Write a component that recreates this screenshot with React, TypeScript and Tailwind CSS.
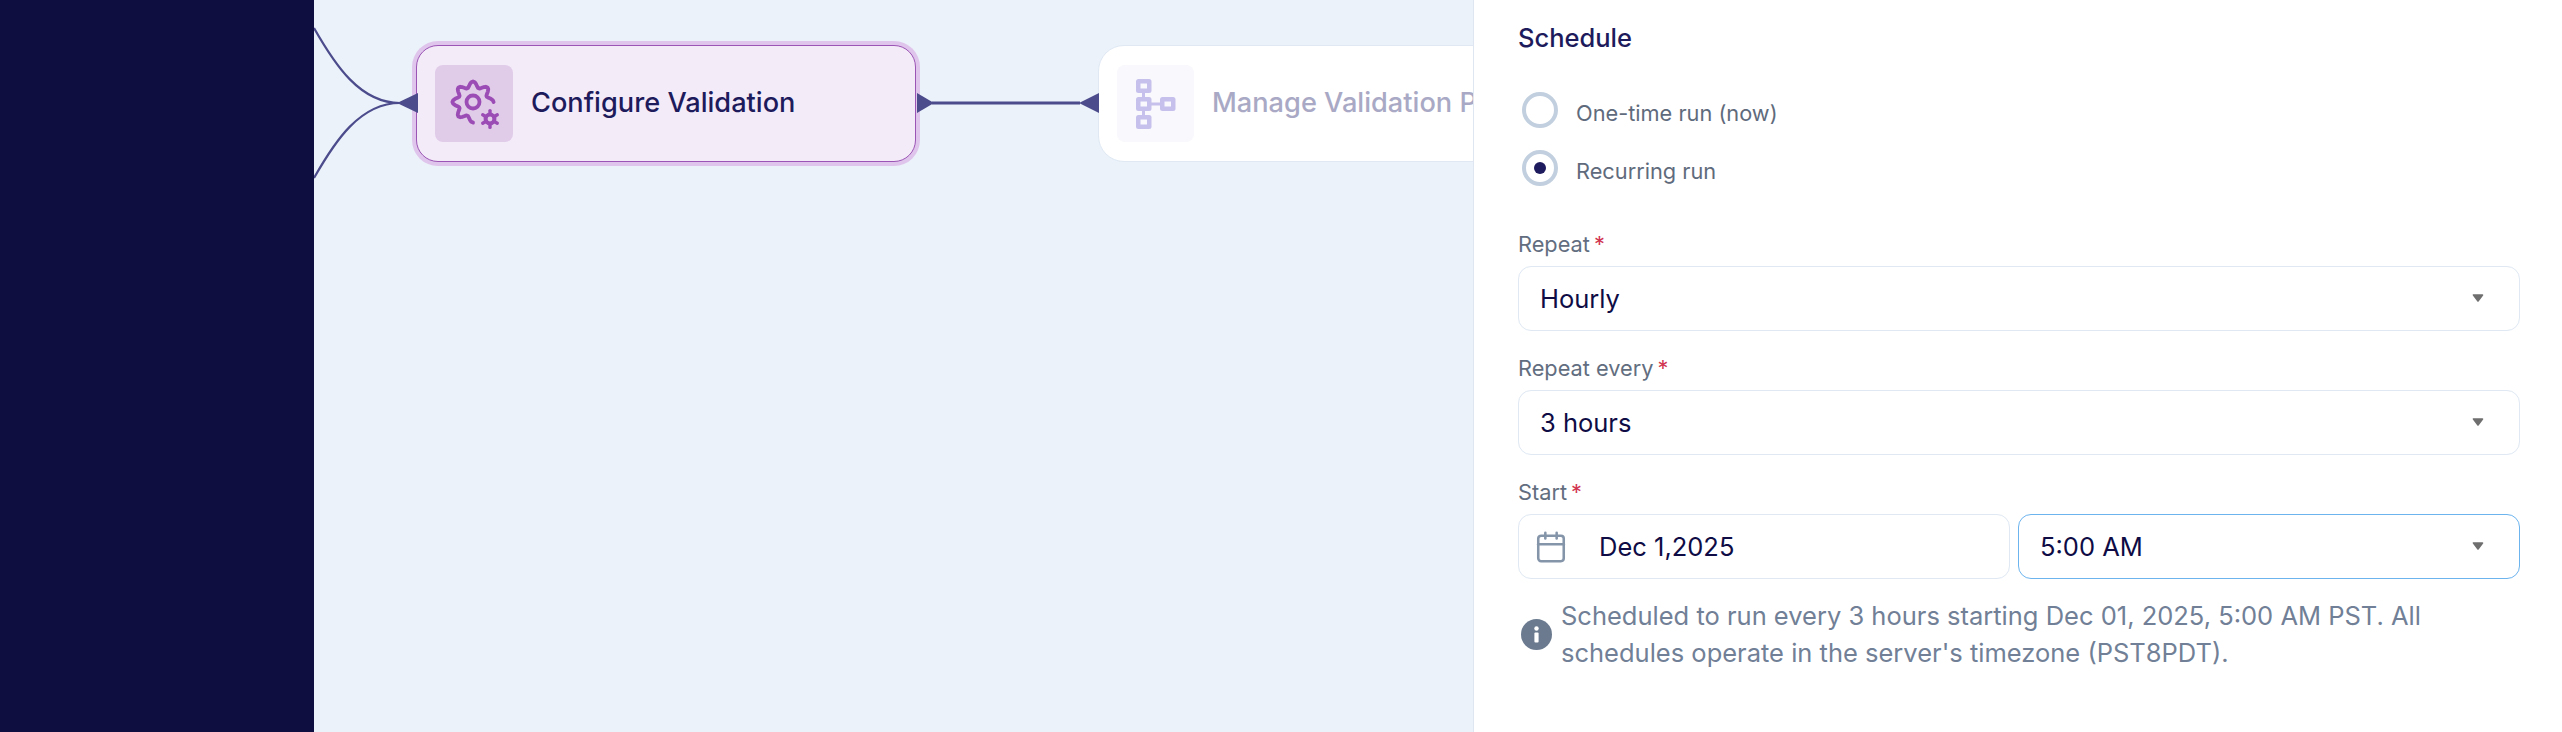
import { Calendar } from "lucide-react";

// Wavy outline of the big gear, left open towards the small cog
function gearPath() {
  const cx = 21;
  const cy = 21;
  const pts: string[] = [];
  for (let deg = 0; deg >= -270; deg -= 5) {
    const a = (deg * Math.PI) / 180;
    const r = 17.6 + 3 * Math.cos(8 * (a + Math.PI / 2));
    pts.push(`${(cx + r * Math.cos(a)).toFixed(2)} ${(cy + r * Math.sin(a)).toFixed(2)}`);
  }
  return "M" + pts.join("L");
}

function GearIcon() {
  const spokes = [0, 60, 120, 180, 240, 300];
  return (
    <svg width="48" height="48" viewBox="-2 -1 48 48" fill="none" stroke="#9b4db5" strokeWidth="3.8" strokeLinecap="round" strokeLinejoin="round" className="overflow-visible">
      <path d={gearPath()} />
      <circle cx="21" cy="21" r="6.5" />
      <circle cx="38" cy="38" r="4.4" strokeWidth="4" />
      {spokes.map((s) => {
        const a = (s * Math.PI) / 180 - Math.PI / 2;
        return (
          <line
            key={s}
            x1={38 + 5 * Math.cos(a)}
            y1={38 + 5 * Math.sin(a)}
            x2={38 + 8.4 * Math.cos(a)}
            y2={38 + 8.4 * Math.sin(a)}
            strokeWidth="3.4"
          />
        );
      })}
    </svg>
  );
}

function TreeIcon() {
  const boxes = [
    { x: 0, y: 0 },
    { x: 0, y: 18 },
    { x: 0, y: 36 },
    { x: 24, y: 18 },
  ];
  return (
    <svg width="40" height="50" viewBox="0 0 40 50">
      <rect x="6" y="10" width="3" height="30" fill="#c5c0ec" />
      <rect x="12" y="23.5" width="14" height="3" fill="#c5c0ec" />
      {boxes.map((b) => (
        <g key={`${b.x}-${b.y}`}>
          <rect x={b.x} y={b.y} width="15.5" height="14" rx="2.5" fill="#c5c0ec" />
          <rect x={b.x + 4.5} y={b.y + 4.5} width="6.5" height="5" fill="#f8f8fd" />
        </g>
      ))}
    </svg>
  );
}

function Caret() {
  return (
    <svg width="12" height="8" viewBox="0 0 12 8" className="shrink-0">
      <path d="M1.5 1h9L6 7z" fill="#6f6f6f" stroke="#6f6f6f" strokeWidth="1.6" strokeLinejoin="round" />
    </svg>
  );
}

function Radio({ label, checked }: { label: string; checked?: boolean }) {
  return (
    <div className="flex h-9 items-center">
      <div className="ml-1 flex h-9 w-9 shrink-0 items-center justify-center rounded-full border-4 border-[#c2cfdf] bg-white">
        {checked && <div className="h-3 w-3 rounded-full bg-[#1e1a5e]" />}
      </div>
      <span className="ml-[18px] mt-[6px] text-[21.75px] leading-8 text-[#5f6b7c]">{label}</span>
    </div>
  );
}

function Label({ text }: { text: string }) {
  return (
    <div className="mb-[11px] flex h-6 items-center pt-px text-[21.75px] leading-6 text-[#626e80]">
      {text}
      <span className="ml-1 text-[21.75px] text-[#d1344f]">*</span>
    </div>
  );
}

function Select({ value, focused }: { value: string; focused?: boolean }) {
  return (
    <div
      className={`flex h-[65px] w-full items-center justify-between rounded-[13px] border bg-white pb-px pl-[21px] pr-[35px] text-[25.5px] text-[#0e0b45] ${
        focused ? "border-[#6cb4ee]" : "border-[#dfe8f3]"
      }`}
    >
      <span className="mt-0.5">{value}</span>
      <Caret />
    </div>
  );
}

export default function App() {
  return (
    <div className="flex h-[732px] w-[2562px] overflow-hidden bg-[#ebf2fa] font-['Inter',sans-serif]">
      <aside className="w-[314px] shrink-0 bg-[#0e0e40]" />

      {/* Flow canvas */}
      <main className="relative flex-1 overflow-hidden">
        <svg className="absolute left-0 top-0" width="1159" height="732" fill="none" stroke="#4c4b8b" strokeWidth="2.2">
          <path d="M0 28C21 65 46 103 86 103" />
          <path d="M0 178C21 141 46 103 86 103" />
          <path d="M618 103H766" strokeWidth="3" />
        </svg>

        <div className="absolute left-[102px] top-[45px] flex h-[117px] w-[500px] items-center rounded-[22px] border border-[#9b55b5] bg-[#f4ebf9] pl-[18px] shadow-[0_0_0_4px_#dfc5eb]">
          <div className="flex h-[77px] w-[78px] items-center justify-center rounded-lg bg-[#e0cbe9]">
            <GearIcon />
          </div>
          <span className="ml-[18px] text-[27.2px] font-medium text-[#1e1b5c]">Configure Validation</span>
        </div>

        <div className="absolute left-[784px] top-[45px] flex h-[117px] w-[501px] items-center rounded-[26px] border border-[#dfe8f3] bg-white pl-[18px]">
          <div className="flex h-[77px] w-[77px] items-center justify-center rounded-lg bg-[#f8f8fd]">
            <TreeIcon />
          </div>
          <span className="ml-[18px] whitespace-nowrap text-[27.2px] font-medium text-[#a9a9c5]">Manage Validation Plan</span>
        </div>

        {/* Connection handles sit over the node rings */}
        <svg className="absolute left-0 top-0" width="1159" height="732">
          <path d="M83 103L104 93V113Z" fill="#4c4b8b" />
          <path d="M603 93L620 103L603 113Z" fill="#4c4b8b" />
          <path d="M765 103L785 93V113Z" fill="#4c4b8b" />
        </svg>
      </main>

      {/* Schedule panel */}
      <section className="relative w-[1089px] shrink-0 border-l border-[#dde6f1] bg-white pl-11 pr-[42px] pt-5">
        <h2 className="text-[25.5px] font-medium leading-9 text-[#1e1b5c]">Schedule</h2>

        <div className="mt-9 flex flex-col gap-[22px]">
          <Radio label="One-time run (now)" />
          <Radio label="Recurring run" checked />
        </div>

        <div className="mt-[45px]">
          <Label text="Repeat" />
          <Select value="Hourly" />
        </div>
        <div className="mt-6">
          <Label text="Repeat every" />
          <Select value="3 hours" />
        </div>
        <div className="mt-6">
          <Label text="Start" />
          <div className="flex gap-2">
            <div className="flex h-[65px] w-[492px] shrink-0 items-center rounded-[13px] border border-[#dfe8f3] bg-white pl-[15px] text-[25.5px] text-[#0e0b45]">
              <Calendar size={34} strokeWidth={1.8} className="text-[#8494a9]" />
              <span className="ml-[31px] mt-0.5">Dec 1,2025</span>
            </div>
            <Select value="5:00 AM" focused />
          </div>
        </div>

        <div className="mt-[18px] flex items-center">
          <svg width="31" height="31" viewBox="0 0 31 31" className="ml-[3px] shrink-0">
            <circle cx="15.5" cy="15.5" r="15.5" fill="#6b7a8f" />
            <circle cx="15.5" cy="9.5" r="2.2" fill="#fff" />
            <rect x="13.4" y="13.5" width="4.2" height="10" rx="1" fill="#fff" />
          </svg>
          <p className="ml-[9px] text-[25.5px] leading-[37px] text-[#718096]">
            Scheduled to run every 3 hours starting Dec 01, 2025, 5:00 AM PST. All
            <br />
            schedules operate in the server's timezone (PST8PDT).
          </p>
        </div>
      </section>
    </div>
  );
}
